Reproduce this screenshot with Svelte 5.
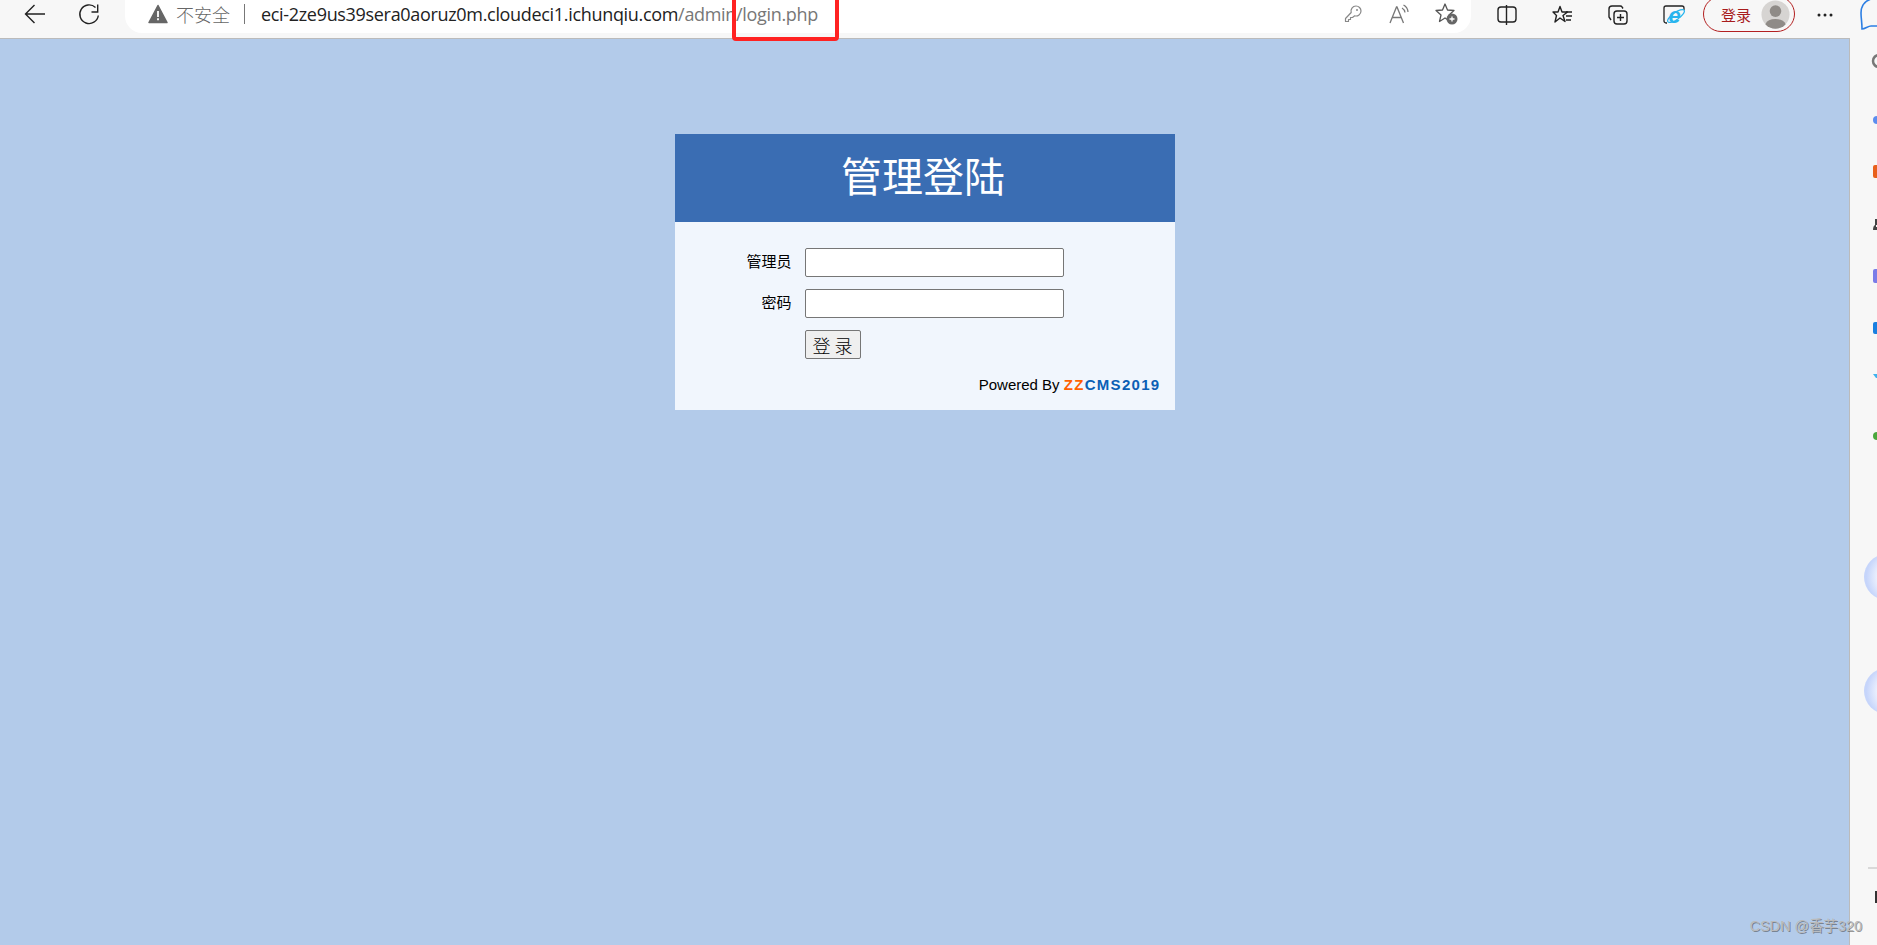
<script>
  const sideDots = [
    { y: 82, r: 4, c: "#5b8def" },
    { y: 398, r: 4, c: "#4aa63c" }
  ];
  const sideBlocks = [
    { y: 127, h: 13, c: "#e8601c" },
    { y: 231, h: 14, c: "#7a7ce8" },
    { y: 284, h: 12, c: "#1a7fe0" }
  ];
</script>

<div class="window">
  <header class="toolbar">
    <button class="nav back" aria-label="back">
      <svg width="24" height="24" viewBox="0 0 24 24" fill="none"><path d="M22 12H3M11.500 3 2.500 12l9 9" stroke="#222" stroke-width="1.4" /></svg>
    </button>
    <button class="nav reload" aria-label="reload">
      <svg width="24" height="24" viewBox="0 0 24 24" fill="none"><path d="M21.300 13.500A9.300 9.300 0 1 1 18.500 5.500" stroke="#222" stroke-width="1.4" /><path d="M20.700 2.500V10h-6.200" stroke="#222" stroke-width="1.4" /></svg>
    </button>
    <div class="address">
      <svg class="warn" width="20" height="20" viewBox="0 0 20 20"><path d="M10 1.500 19 18.500H1Z" fill="#666" stroke="#666" stroke-width="1.500" stroke-linejoin="round" /><path d="M10 7v6M10 14.200v2" stroke="#fff" stroke-width="1.800" /></svg>
      <span class="insecure">不安全</span>
      <span class="divider"></span>
      <span class="url">eci-2ze9us39sera0aoruz0m.cloudeci1.ichunqiu.com<span class="path">/admin/login.php</span></span>
      <span class="bar-icons">
        <svg width="20" height="20" viewBox="0 0 20 20" fill="none"><path d="M13 2a5 5 0 0 1 5 5 5 5 0 0 1-6.300 4.800L9.500 13.500h-2v2h-2v2h-3v-3L8.200 8.500A5 5 0 0 1 13 2Z" stroke="#888" stroke-width="1.200" stroke-linejoin="round" /><circle cx="14" cy="6" r="1" fill="#888" /></svg>
        <svg width="22" height="22" viewBox="0 0 22 22" fill="none"><path d="M2 20 8.500 4h.5l6.500 16M4.500 14.500h8.500" stroke="#777" stroke-width="1.300" /><path d="M14 5a6 6 0 0 1 3 4.500M15.500 2a8.500 8.500 0 0 1 4.500 7" stroke="#777" stroke-width="1.200" /></svg>
        <svg width="24" height="24" viewBox="0 0 24 24" fill="none"><path d="m10 2 2.500 6 6.500.5-5 4.500 1.500 6.500-5.500-3.500L4.500 19.500 6 13 1 8.500 7.500 8Z" stroke="#555" stroke-width="1.300" stroke-linejoin="round" /><circle cx="17" cy="17" r="5.500" fill="#666" /><path d="M14.500 17h5M17 14.500v5" stroke="#fff" stroke-width="1.300" /></svg>
      </span>
    </div>
    <div class="tools">
      <svg class="tool-split" width="22" height="22" viewBox="0 0 22 22" fill="none"><rect x="2" y="3" width="18" height="15" rx="3" stroke="#222" stroke-width="1.400" /><path d="M10.500 1v20" stroke="#222" stroke-width="1.400" /></svg>
      <svg class="tool-fav" width="22" height="22" viewBox="0 0 22 22" fill="none"><path d="M8 2.500 10 8h5.500L11 11.500l2 6-5-3.500-5 4 1.500-6.500L1 8h5Z" stroke="#222" stroke-width="1.400" stroke-linejoin="round" /><path d="M14 8h6M14 12h6M14 16h5" stroke="#222" stroke-width="1.300" /></svg>
      <svg class="tool-coll" width="22" height="22" viewBox="0 0 22 22" fill="none"><rect x="7" y="7" width="13" height="13" rx="3" stroke="#222" stroke-width="1.400" /><path d="M16 4.500 15 3a2 2 0 0 0-2-1H5a3 3 0 0 0-3 3v8l2 3M13.500 10v7M10 13.500h7" stroke="#222" stroke-width="1.400" /></svg>
      <svg class="tool-ie" width="24" height="24" viewBox="0 0 24 24" fill="none"><path d="M5 20H4a2 2 0 0 1-2-2V5a2 2 0 0 1 2-2h16a2 2 0 0 1 2 2v2" stroke="#222" stroke-width="1.300" /><ellipse cx="14" cy="13" rx="10" ry="3.500" transform="rotate(-35 14 13)" stroke="#27b4ee" stroke-width="1.200" /><text class="ie-glyph" x="6.500" y="20">e</text></svg>
      <div class="login-pill">
        <span>登录</span>
        <svg width="29" height="29" viewBox="0 0 30 30"><circle cx="15" cy="15" r="14.500" fill="#d6d4d2" /><circle cx="15" cy="11.500" r="6" fill="#8f8b87" /><path d="M4.500 25a11 7.500 0 0 1 21 0 14 14 0 0 1-21 0Z" fill="#8f8b87" /></svg>
      </div>
      <svg class="tool-more" width="18" height="6" viewBox="0 0 18 6"><circle cx="3" cy="3" r="1.500" fill="#222" /><circle cx="9" cy="3" r="1.500" fill="#222" /><circle cx="15" cy="3" r="1.500" fill="#222" /></svg>
      <svg class="tool-chat" width="24" height="34" viewBox="0 0 24 34" fill="none"><path d="M12 1C6 3 2 8 2 15c0 5 1 9 1 16 3 0 6-3 9-3h12" stroke="#2d7fe3" stroke-width="1.600" /></svg>
    </div>
  </header>

  <div class="content">
    <main class="page">
      <section class="card">
        <h1>管理登陆</h1>
        <form class="form">
          <label class="row"><span class="label">管理员</span><input type="text" /></label>
          <label class="row"><span class="label">密码</span><input type="password" /></label>
          <div class="row"><span></span><button type="button" class="submit">登 录</button></div>
          <p class="powered">Powered By <b><em>ZZ</em>CMS2019</b></p>
        </form>
      </section>
    </main>
    <aside class="side">
      <svg width="27" height="906" viewBox="0 0 27 906">
        <defs>
          <radialGradient id="orb" cx="0.65" cy="0.5" r="0.6">
            <stop offset="0.55" stop-color="#f0f4fe" />
            <stop offset="1" stop-color="#c6d5fb" />
          </radialGradient>
        </defs>
        <circle cx="29" cy="23" r="6" fill="none" stroke="#777" stroke-width="2.500" />
        {#each sideDots as d}
          <circle cx="27" cy={d.y} r={d.r} fill={d.c} />
        {/each}
        {#each sideBlocks as b}
          <rect x="23" y={b.y} width="8" height={b.h} rx="2" fill={b.c} />
        {/each}
        <path d="M23 192h4v-3h-1v-2h1v-6h-2v6q-2 1-2 5Z" fill="#444" />
        <path d="M23 336h5v4h-2Z" fill="#3fb2ee" />
        <circle cx="37" cy="539" r="23" fill="url(#orb)" />
        <circle cx="37" cy="653" r="23" fill="url(#orb)" />
        <path d="M18 830h9" stroke="#bbb" />
        <path d="M26 853v12" stroke="#333" stroke-width="2" />
      </svg>
    </aside>
  </div>

  <div class="annotation"></div>
  <span class="watermark">CSDN @香芋320</span>
</div>

<style>
  :global(body) {
    margin: 0;
    overflow: hidden;
  }
  .window {
    position: relative;
    display: flex;
    flex-direction: column;
    height: 945px;
    overflow: hidden;
    background: #f7f7f7;
    font-family: "Liberation Sans", "Noto Sans CJK SC", sans-serif;
  }
  .toolbar {
    display: flex;
    align-items: flex-start;
    flex: none;
    height: 38px;
    background: #f7f7f7;
  }
  .nav {
    display: grid;
    place-items: center;
    width: 24px;
    height: 28px;
    padding: 0;
    border: 0;
    background: none;
  }
  .back {
    margin-left: 23px;
  }
  .reload {
    margin-left: 30px;
  }
  .address {
    display: flex;
    align-items: center;
    flex: none;
    box-sizing: border-box;
    width: 1346px;
    height: 33px;
    margin-left: 24px;
    padding: 0 0 5px 23px;
    border-radius: 0 0 17px 17px;
    background: #fff;
    color: #666;
    font-family: "Open Sans", "Noto Sans CJK SC", sans-serif;
    font-size: 18px;
  }
  .insecure {
    margin-left: 8px;
    font-family: "Noto Sans CJK SC", sans-serif;
    font-weight: 300;
  }
  .divider {
    width: 1px;
    height: 20px;
    margin: 0 16px 0 14px;
    background: #777;
  }
  .url {
    color: #222;
    letter-spacing: -0.32px;
    white-space: nowrap;
  }
  .path {
    color: #777;
  }
  .bar-icons {
    display: flex;
    align-items: center;
    gap: 25px;
    margin-left: auto;
    margin-right: 12px;
  }
  .tools {
    display: flex;
    align-items: center;
    flex: 1;
    height: 30px;
  }
  .tool-split {
    margin-left: 25px;
  }
  .tool-fav {
    margin-left: 34px;
  }
  .tool-coll {
    margin-left: 33px;
  }
  .tool-ie {
    margin-left: 33px;
  }
  .ie-glyph {
    fill: #27b4ee;
    font-family: "Liberation Sans", sans-serif;
    font-size: 22px;
    font-style: italic;
    font-weight: 700;
  }
  .login-pill {
    display: flex;
    align-items: center;
    justify-content: space-between;
    box-sizing: border-box;
    flex: none;
    width: 92px;
    height: 36px;
    margin: -2px 0 0 17px;
    padding: 0 4px 0 17px;
    border: 1.5px solid #b32020;
    border-radius: 18px;
    color: #a81c1c;
    font-size: 15px;
  }
  .tool-more {
    margin-left: 21px;
  }
  .tool-chat {
    margin-left: 25px;
    flex: none;
  }
  .content {
    display: flex;
    flex: 1;
    min-height: 0;
  }
  .page {
    flex: 1;
    display: flex;
    justify-content: center;
    align-items: flex-start;
    box-sizing: border-box;
    padding: 95px 0 0;
    border-top: 1px solid #bbb;
    border-right: 1px solid #bbb;
    background: #b3cbea;
  }
  .side {
    flex: none;
    width: 27px;
    overflow: hidden;
    line-height: 0;
  }
  .card {
    width: 500px;
    background: #f1f6fd;
  }
  h1 {
    box-sizing: border-box;
    height: 88px;
    margin: 0;
    padding-right: 3px;
    background: #3a6db3;
    color: #fff;
    font-family: "Noto Sans CJK SC", sans-serif;
    font-size: 41px;
    font-weight: 400;
    line-height: 80px;
    text-align: center;
  }
  .form {
    padding: 26px 14px 17px 0;
  }
  .row {
    display: grid;
    grid-template-columns: 117px 259px;
    column-gap: 13px;
    align-items: center;
    margin-bottom: 12px;
    font-size: 15px;
    text-align: right;
  }
  .label {
    padding-bottom: 5px;
  }
  .row input {
    box-sizing: border-box;
    width: 100%;
    height: 29px;
    border: 1px solid #767676;
    border-radius: 2px;
    background: #fff;
  }
  .submit {
    justify-self: start;
    box-sizing: border-box;
    width: 56px;
    height: 29px;
    padding: 0;
    border: 1px solid #767676;
    border-radius: 2px;
    background: #efefef;
    color: #000;
    font-family: "Noto Sans CJK SC", sans-serif;
    font-size: 18px;
    font-weight: 300;
  }
  .powered {
    margin: 18px 0 0;
    font-size: 15px;
    line-height: 16px;
    text-align: right;
  }
  .powered b {
    color: #0b5fb5;
    letter-spacing: 1.3px;
  }
  .powered em {
    color: #ff6000;
    font-style: normal;
  }
  .annotation {
    position: absolute;
    top: -4px;
    left: 732px;
    box-sizing: border-box;
    width: 107px;
    height: 45px;
    border: 4px solid #f22;
    border-radius: 4px;
  }
  .watermark {
    position: absolute;
    right: 15px;
    bottom: 10px;
    color: #bbb;
    font-size: 14.400px;
    text-shadow: 1px 1px 0 rgba(70, 70, 70, 0.55);
  }
</style>
